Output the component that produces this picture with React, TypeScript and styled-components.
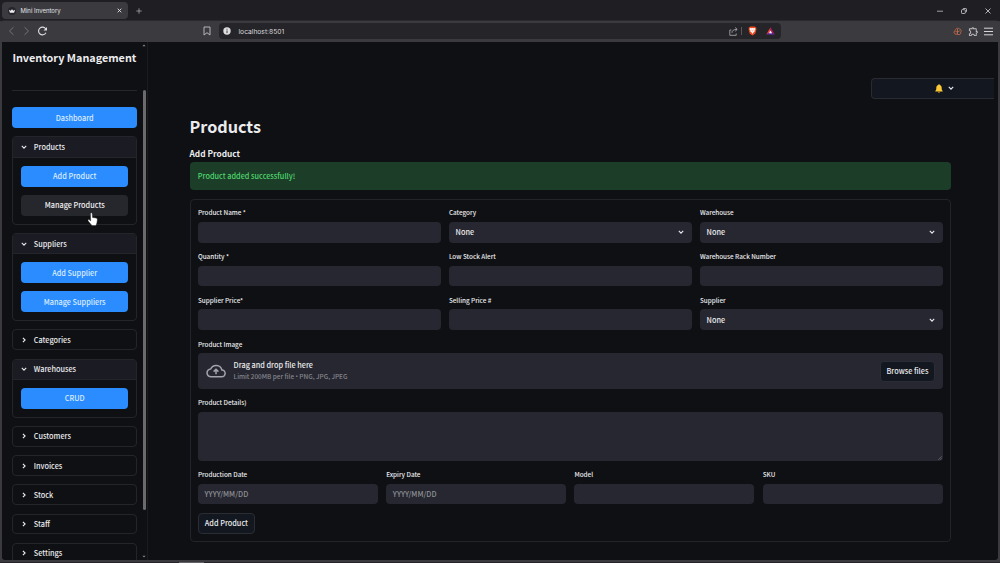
import { FC, PropsWithChildren } from 'react'
import { createGlobalStyle, styled } from 'styled-components'
import { MdOutlineExtension } from 'react-icons/md'

const GlobalStyle = createGlobalStyle`
  * {
    box-sizing: border-box;
  }

  body {
    margin: 0;
    overflow: hidden;
    background: #3b3a3f;
    color: #ececee;
    font-family: 'Noto Sans CJK SC', 'Noto Sans', sans-serif;
    font-size: 7.3px;
    font-weight: 500;
    line-height: 10px;
  }

  svg {
    display: block;
    flex: none;
  }
`

const Window = styled.div`
  position: relative;
  display: flex;
  flex-direction: column;
  width: 1000px;
  height: 563px;
  overflow: hidden;
`

const TabBar = styled.div`
  display: flex;
  align-items: center;
  height: 21px;
  padding-left: 2px;
  background: #1f1e23;
  font-family: Inter, sans-serif;
`

const Tab = styled.div`
  display: flex;
  align-items: center;
  width: 125.5px;
  height: 17px;
  padding: 0 6px 0 5.5px;
  border-radius: 4px;
  background: #3b3a3f;
  color: #e2e2e4;
  font-size: 6px;
  font-weight: 400;
`

const TabTitle = styled.span`
  flex: 1;
  margin-left: 5px;
`

const NewTab = styled.div`
  margin-left: 8px;
`

const WindowButtons = styled.div`
  display: flex;
  align-items: center;
  gap: 18px;
  margin-left: auto;
  padding-right: 9px;
`

const Toolbar = styled.div`
  display: flex;
  align-items: center;
  height: 20.5px;
  padding: 0 7px 0 8px;
  border-radius: 4px 4px 0 0;
  background: #3b3a3f;
  box-shadow: 0 -2px 0 -1px #2a292e;
  font-family: Inter, sans-serif;
`

const NavButtons = styled.div`
  display: flex;
  align-items: center;
  gap: 8px;
  width: 194px;
`

const AddressBar = styled.div`
  display: flex;
  align-items: center;
  width: 562px;
  height: 16px;
  margin-left: 7px;
  padding: 0 6px 0 4px;
  border-radius: 4px;
  background: #252429;
`

const Url = styled.span`
  flex: 1;
  margin-left: 7.5px;
  padding-top: 1px;
  color: #d6d6d8;
  font-size: 6.7px;
  font-weight: 400;
`

const Separator = styled.div`
  width: 1px;
  height: 8px;
  margin: 0 6px 0 3px;
  background: #57565b;
`

const ToolbarEnd = styled.div`
  display: flex;
  align-items: center;
  gap: 5.5px;
  margin-left: auto;
`

const Page = styled.div`
  display: flex;
  width: 996px;
  height: 518.5px;
  margin-left: 2px;
  background: #0f1014;
  border-radius: 0 0 3px 3px;
  overflow: hidden;
`

const Sidebar = styled.div`
  display: flex;
  width: 145.5px;
  border-right: 1px solid #1b1c20;
`

const SidebarContent = styled.div`
  display: flex;
  flex-direction: column;
  gap: 8.35px;
  width: 124.6px;
  margin-left: 10.4px;
`

const SidebarTitle = styled.h2`
  flex: none;
  height: 49.4px;
  margin: 0 0 8px;
  padding-top: 6px;
  border-bottom: 1px solid #26272c;
  font-size: 10.8px;
  font-weight: 700;
  line-height: 18px;
  white-space: nowrap;
`

const SidebarButton = styled.button<{ $hovered?: boolean }>`
  flex: none;
  width: 100%;
  height: 20.83px;
  padding: 0;
  border: 0;
  border-radius: 4px;
  background: ${props => (props.$hovered ? '#26272d' : '#2a8cff')};
  color: ${props => (props.$hovered ? '#f0f0f2' : '#dcecff')};
  font: 500 7.3px/10px 'Noto Sans CJK SC', sans-serif;
`

const Expander = styled.div`
  flex: none;
  border: 1px solid #24252a;
  border-radius: 4px;
  overflow: hidden;
`

const ExpanderHeader = styled.div<{ $open?: boolean }>`
  display: flex;
  align-items: center;
  gap: 6.4px;
  height: ${props => (props.$open ? '20.4px' : '18.85px')};
  padding-left: 8px;
  border-bottom: ${props => (props.$open ? '1px solid #24252a' : '0')};
  background: ${props => (props.$open ? '#1a1b23' : 'transparent')};
`

const ExpanderBody = styled.div`
  display: flex;
  flex-direction: column;
  gap: 8.35px;
  padding: 7.9px 7.8px 7.9px;
`

const Scrollbar = styled.div`
  display: flex;
  flex-direction: column;
  align-items: center;
  width: 4px;
  margin-left: 5.4px;
  padding: 2px 0;
`

const ScrollThumb = styled.div`
  width: 3px;
  height: 420px;
  margin: 43.5px 0 auto;
  border-radius: 2px;
  background: #6b6b6e;
`

const Main = styled.div`
  flex: 1;
  padding-left: 42px;
`

const PopoverRow = styled.div`
  display: flex;
  justify-content: flex-end;
  padding: 36.4px 4.5px 0 0;
`

const PopoverButton = styled.div`
  display: flex;
  align-items: center;
  justify-content: center;
  gap: 4.5px;
  width: 123px;
  height: 21px;
  padding-left: 23.5px;
  border: 1px solid #292b31;
  border-right: 0;
  border-radius: 4px 0 0 4px;
  background: #131720;
`

const Content = styled.div`
  width: 761.5px;
`

const Title = styled.h1`
  margin: 15.2px 0 0;
  font-size: 16.2px;
  font-weight: 700;
  line-height: 25px;
`

const Subtitle = styled.h3`
  margin: 7.6px 0 2px;
  font-size: 8.3px;
  font-weight: 700;
  line-height: 13px;
`

const Alert = styled.div`
  height: 28.5px;
  padding: 9px 8.3px;
  border-radius: 4px;
  background: #1c3d27;
  color: #4fd56f;
`

const Form = styled.div`
  display: flex;
  flex-direction: column;
  gap: 8.35px;
  height: 343.5px;
  margin-top: 8.5px;
  padding: 7.4px;
  border: 1px solid #232429;
  border-radius: 4px;
`

const FormRow = styled.div<{ $columns?: number }>`
  display: grid;
  grid-template-columns: repeat(${props => props.$columns || 1}, 1fr);
  gap: 8.35px;
`

const Label = styled.div`
  height: 14.7px;
  font-size: 6.35px;
  line-height: 12.4px;
`

const Box = styled.div<{ $height?: number; $muted?: boolean }>`
  position: relative;
  display: flex;
  align-items: center;
  justify-content: space-between;
  height: ${props => props.$height || 20.83}px;
  padding: 0 7.7px 0 6.7px;
  border-radius: 4px;
  background: #262730;
  color: ${props => (props.$muted ? '#8f9096' : '#ececee')};
`

const DropIcon = styled.div`
  margin: 0 8px 0 1px;
`

const DropText = styled.div`
  flex: 1;
  line-height: 12px;
`

const DropHint = styled.div`
  color: #85868d;
  font-size: 6.4px;
`

const Bullet = styled.span`
  font-family: 'Open Sans', sans-serif;
  font-size: 6.5px;
`

const Button = styled.button<{ $width: number }>`
  flex: none;
  width: ${props => props.$width}px;
  height: 21px;
  padding: 0;
  border: 1px solid #2b2d34;
  border-radius: 4px;
  background: #131720;
  color: #ececee;
  font: 500 7.3px/10px 'Noto Sans CJK SC', sans-serif;
  white-space: nowrap;
`

const ResizeHandle = styled.svg`
  position: absolute;
  right: 1px;
  bottom: 1px;
`

const BottomEdge = styled.div`
  height: 1px;
  margin-top: auto;
  padding-left: 179px;
  background: #242328;
`

const BottomTask = styled.div`
  width: 25px;
  height: 1px;
  background: #626166;
`

const Pointer = styled.svg`
  position: absolute;
  left: 86.5px;
  top: 212px;
`

const RewardsIcon = styled.svg`
  margin-left: 9px;
`

const Chevron: FC<{ right?: boolean }> = ({ right }) => (
  <svg width='6' height='6' viewBox='0 0 6 6' fill='none' stroke='#e8e8ea' strokeWidth='1.15'>
    <path d={right ? 'M1.9 .8 4.1 3 1.9 5.2' : 'M.8 1.9 3 4.1 5.2 1.9'} />
  </svg>
)

const ScrollArrow: FC<{ down?: boolean }> = ({ down }) => (
  <svg width='4' height='3' viewBox='0 0 4 3' fill='#8c8c90'>
    <path d={down ? 'M.5.7h3L2 2.4z' : 'M.5 2.3h3L2 .6z'} />
  </svg>
)

interface SectionProps extends PropsWithChildren {
  title: string
}

const Section: FC<SectionProps> = ({ title, children }) => (
  <Expander>
    <ExpanderHeader $open={!!children}>
      <Chevron right={!children} />
      {title}
    </ExpanderHeader>
    {children && <ExpanderBody>{children}</ExpanderBody>}
  </Expander>
)

interface FieldProps {
  label: string
  select?: boolean
  placeholder?: string
}

const Field: FC<FieldProps> = ({ label, select, placeholder }) => (
  <div>
    <Label>{label}</Label>
    <Box $muted={!!placeholder}>
      {select ? 'None' : placeholder}
      {select && <Chevron />}
    </Box>
  </div>
)

const BrowserChrome = () => (
  <>
    <TabBar>
      <Tab>
        <svg width='8' height='8' viewBox='0 0 8 8'>
          <circle cx='4' cy='4' r='4' fill='#25252b' />
          <path d='M.9 2.8 2.7 3.7 4 2.2l1.3 1.5 1.8-.9-1 2.9H1.9z' fill='#eee' />
        </svg>
        <TabTitle>Mini Inventory</TabTitle>
        <svg width='5' height='5' viewBox='0 0 5 5' stroke='#e8e8ea' strokeWidth='.9'>
          <path d='m.7.7 3.6 3.6M4.3.7.7 4.3' />
        </svg>
      </Tab>
      <NewTab>
        <svg width='6' height='6' viewBox='0 0 6 6' stroke='#a5a5a8' strokeWidth='.8'>
          <path d='M3 .3v5.4M.3 3h5.4' />
        </svg>
      </NewTab>
      <WindowButtons>
        <svg width='6' height='6' viewBox='0 0 6 6' stroke='#c4c4c6' strokeWidth='.8'>
          <path d='M0 3.2h6' />
        </svg>
        <svg width='6' height='6' viewBox='0 0 6 6' fill='none' stroke='#c4c4c6' strokeWidth='.9'>
          <rect x='.5' y='1.7' width='3.8' height='3.8' rx='.7' />
          <path d='M1.8 1.2Q2 .5 2.6.5h2.1q.8 0 .8.8v2.1q0 .7-.7.8' />
        </svg>
        <svg width='6' height='6' viewBox='0 0 6 6' stroke='#c4c4c6' strokeWidth='.9'>
          <path d='m.5.5 5 5M5.5.5l-5 5' />
        </svg>
      </WindowButtons>
    </TabBar>
    <Toolbar>
      <NavButtons>
        <svg width='7' height='10' viewBox='0 0 7 10' fill='none' stroke='#737277' strokeWidth='1'>
          <path d='M5.5 1.2 1.5 5l4 3.8' />
        </svg>
        <svg width='7' height='10' viewBox='0 0 7 10' fill='none' stroke='#737277' strokeWidth='1'>
          <path d='M1.5 1.2 5.5 5l-4 3.8' />
        </svg>
        <svg width='10' height='10' viewBox='.5 0 10 10' fill='none' stroke='#dededf' strokeWidth='1.1'>
          <path d='M8.4 6.8A3.9 3.9 0 1 1 8.3 3' />
          <path d='M9.5.9v3.5H6z' fill='#dededf' stroke='none' />
        </svg>
      </NavButtons>
      <svg width='10' height='10' viewBox='0 0 10 10' fill='none' stroke='#b5b4b8' strokeWidth='1'>
        <path d='M2 1h6v8L5 6.7 2 9z' strokeLinejoin='round' />
      </svg>
      <AddressBar>
        <svg width='8' height='8' viewBox='0 0 8 8'>
          <circle cx='4' cy='4' r='3.7' fill='#dededf' />
          <path d='M4 1.8v.9M4 3.5v2.6' stroke='#29282d' strokeWidth='.9' />
        </svg>
        <Url>localhost:8501</Url>
        <svg width='9' height='9' viewBox='0 0 9 9' fill='none' stroke='#a3a2a7' strokeWidth='.9'>
          <path d='M2.4 3H.8v5.3h6.4V6.5M3 5.8C3 3.5 4.7 2.4 8 2.4M6.2.5l2 1.9-2 1.9' />
        </svg>
        <Separator />
        <svg width='9' height='10' viewBox='0 0 9 10'>
          <path d='M2.2.4h4.6l.7.8.9.2-.2 1.4.2.9-1.2 4.1L4.5 9.6 1.8 7.8.6 3.7l.2-.9L.6 1.4l.9-.2z' fill='#f04b20' />
          <path d='m2 2.1 1.5.2 1-.3 1 .3L7 2.1l.5 1.2-1 1.3.2 1-1.4.8L4.5 8l-.8-1.6-1.4-.8.2-1-1-1.3z' fill='#fff' />
          <path d='m3.3 3.6.8.3v1l.4.5.4-.5v-1l.8-.3' fill='none' stroke='#f04b20' strokeWidth='.3' />
        </svg>
        <RewardsIcon width='9' height='8' viewBox='0 0 9 8'>
          <path d='M4.5.2.3 7.6l4.2-2.5z' fill='#f0453a' />
          <path d='m4.5.2 4.2 7.4-4.2-2.5z' fill='#b51561' />
          <path d='M.3 7.6h8.4L4.5 5z' fill='#6a2bb0' />
          <path d='M4.5 3.6 2.9 6.3h3.2z' fill='#fff' />
        </RewardsIcon>
      </AddressBar>
      <ToolbarEnd>
        <svg width='9' height='9' viewBox='0 0 9 9' fill='none' stroke='#c96f4d' strokeWidth='.8'>
          <path d='M2.8 2.4a2 2 0 0 1 3.4-.5 2 2 0 0 1 1.5 3.3 1.9 1.9 0 0 1-2.6 2.3M2.8 2.4.8 5.2l1.4 2 2.2-.1M4.5 2v5.8M2.3 4.7l2.2.1 2.2-.9' />
        </svg>
        <MdOutlineExtension size={11} color='#c6c5c9' />
        <svg width='9' height='9' viewBox='0 0 9 9' stroke='#d6d6d8' strokeWidth='1'>
          <path d='M0 1.2h9M0 4.5h9M0 7.8h9' />
        </svg>
      </ToolbarEnd>
    </Toolbar>
  </>
)

function App() {
  return (
    <Window>
      <GlobalStyle />
      <BrowserChrome />
      <Page>
        <Sidebar>
          <SidebarContent>
            <SidebarTitle>Inventory Management</SidebarTitle>
            <SidebarButton>Dashboard</SidebarButton>
            <Section title='Products'>
              <SidebarButton>Add Product</SidebarButton>
              <SidebarButton $hovered>Manage Products</SidebarButton>
            </Section>
            <Section title='Suppliers'>
              <SidebarButton>Add Supplier</SidebarButton>
              <SidebarButton>Manage Suppliers</SidebarButton>
            </Section>
            <Section title='Categories' />
            <Section title='Warehouses'>
              <SidebarButton>CRUD</SidebarButton>
            </Section>
            <Section title='Customers' />
            <Section title='Invoices' />
            <Section title='Stock' />
            <Section title='Staff' />
            <Section title='Settings' />
          </SidebarContent>
          <Scrollbar>
            <ScrollArrow />
            <ScrollThumb />
            <ScrollArrow down />
          </Scrollbar>
        </Sidebar>
        <Main>
          <PopoverRow>
            <PopoverButton>
              <svg width='8' height='9' viewBox='0 0 8 9'>
                <path d='M4 .3c.6 0 .8.4.8.8 1.6.4 1.9 1.7 1.9 3.1s.3 1.900 1 2.700v.6H.3v-.6c.7-.8 1-1.300 1-2.700s.3-2.700 1.900-3.100c0-.4.2-.8.8-.8z' fill='#fcc934' />
                <path d='M3 7.7h2c0 .6-.4 1-1 1s-1-.4-1-1z' fill='#d9971e' />
              </svg>
              <Chevron />
            </PopoverButton>
          </PopoverRow>
          <Content>
            <Title>Products</Title>
            <Subtitle>Add Product</Subtitle>
            <Alert>Product added successfully!</Alert>
            <Form>
              <FormRow $columns={3}>
                <Field label='Product Name *' />
                <Field label='Category' select />
                <Field label='Warehouse' select />
              </FormRow>
              <FormRow $columns={3}>
                <Field label='Quantity *' />
                <Field label='Low Stock Alert' />
                <Field label='Warehouse Rack Number' />
              </FormRow>
              <FormRow $columns={3}>
                <Field label='Supplier Price*' />
                <Field label='Selling Price #' />
                <Field label='Supplier' select />
              </FormRow>
              <div>
                <Label>Product Image</Label>
                <Box $height={35.4}>
                  <DropIcon>
                    <svg width='20' height='14' viewBox='0 0 20 14' fill='none' stroke='#a3a4ae' strokeWidth='1.5'>
                      <path d='M5.2 12.8h10.4a3.4 3.4 0 0 0 .3-6.8A6 6 0 0 0 4.7 5a3.9 3.9 0 0 0 .5 7.8z' strokeLinejoin='round' />
                      <path d='M10 10.2V5.6M7.6 7.6 10 5.3l2.4 2.3' />
                    </svg>
                  </DropIcon>
                  <DropText>
                    Drag and drop file here
                    <DropHint>
                      Limit 200MB per file <Bullet>•</Bullet> PNG, JPG, JPEG
                    </DropHint>
                  </DropText>
                  <Button $width={55}>Browse files</Button>
                </Box>
              </div>
              <div>
                <Label>Product Details)</Label>
                <Box $height={48.8}>
                  <ResizeHandle width='4' height='4' viewBox='0 0 4 4' stroke='#85868b' strokeWidth='.6'>
                    <path d='M.3 3.8 3.8.3M2.3 3.8 3.8 2.3' />
                  </ResizeHandle>
                </Box>
              </div>
              <FormRow $columns={4}>
                <Field label='Production Date' placeholder='YYYY/MM/DD' />
                <Field label='Expiry Date' placeholder='YYYY/MM/DD' />
                <Field label='Model' />
                <Field label='SKU' />
              </FormRow>
              <Button $width={57}>Add Product</Button>
            </Form>
          </Content>
        </Main>
      </Page>
      <BottomEdge>
        <BottomTask />
      </BottomEdge>
      <Pointer width='11.5' height='15' viewBox='0 0 10 13'>
        <path
          d='M3 1.3c0-1 1.4-1 1.5 0l.3 3.4 3 .5c1 .2 1.3.8 1.2 1.7l-.4 2.7-.8 2.2H4.3L1 7.8c-.6-.9.4-1.6 1.1-1l1.1.9z'
          fill='#fff'
          stroke='#222'
          strokeWidth='.4'
        />
      </Pointer>
    </Window>
  )
}

export default App
